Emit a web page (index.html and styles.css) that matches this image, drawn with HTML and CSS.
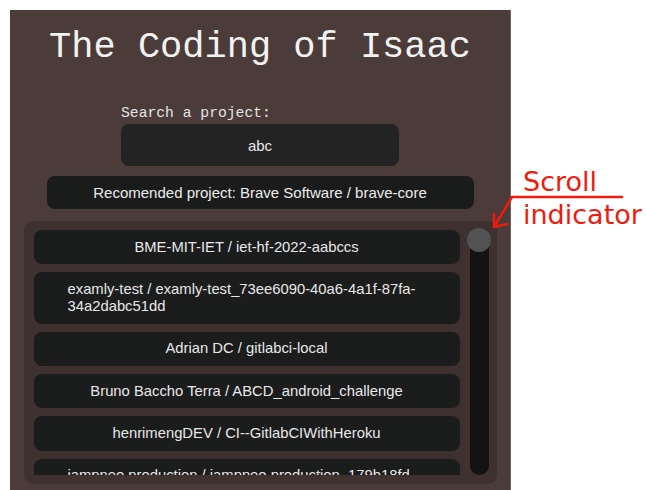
FILE: index.html
```html
<!DOCTYPE html>
<html>
	<head>
		<title>The Coding of Isaac</title>
		<link rel="stylesheet" href="styles.css">
	</head>

	<body>
		<div id="panel">
			<h1>The Coding of Isaac</h1>
			<div id="search">
				<label for="searchInput">Search a project:</label>
				<input id="searchInput" type="text" value="abc">
			</div>
			<div id="recommended">Recomended project: Brave Software / brave-core</div>
			<div id="results">
				<div id="resultList">
					<div class="project"><span>BME-MIT-IET / iet-hf-2022-aabccs</span></div>
					<div class="project"><span>examly-test / examly-test_73ee6090-40a6-4a1f-87fa-34a2dabc51dd</span></div>
					<div class="project"><span>Adrian DC / gitlabci-local</span></div>
					<div class="project"><span>Bruno Baccho Terra / ABCD_android_challenge</span></div>
					<div class="project"><span>henrimengDEV / CI--GitlabCIWithHeroku</span></div>
					<div class="project"><span>iampneo production / iampneo production_179b18fd-509</span></div>
				</div>
				<div id="scrollTrack">
					<div id="scrollThumb"></div>
				</div>
			</div>
		</div>

		<div id="note">
			<svg width="140" height="40" viewBox="0 0 140 40">
				<path d="M20 7 L130 7 M20 7 L2 37 M2 37 L2 24 M2 37 L15 34" stroke="#f21a0c" stroke-width="2.5" fill="none" stroke-linecap="round"/>
			</svg>
			<p>Scroll<br>indicator</p>
		</div>
	</body>
</html>
```

FILE: styles.css
```css
html, body {
	margin: 0px;
	padding: 0px;
	overflow: hidden;
	background: white;
}

body {
	padding: 10px 0px 0px 10px;
	height: 480px;
}

#panel {
	width: 500px;
	height: 480px;
	background: #4b3c3a;
	border-right: 1px solid #6f6361;
	display: flex;
	flex-direction: column;
	align-items: center;
}

h1 {
	font-family: "Liberation Mono", monospace;
	font-weight: normal;
	font-size: 37px;
	color: #f2f2f2;
	margin: 17px 0px 0px 0px;
	line-height: 40px;
}

#search {
	display: flex;
	flex-direction: column;
	margin-top: 39px;
}

#search label {
	font-family: "Liberation Mono", monospace;
	font-size: 14.7px;
	color: #e4e4e4;
	line-height: 14px;
	margin-bottom: 4px;
}

#searchInput {
	width: 278px;
	height: 42px;
	box-sizing: border-box;
	border: none;
	border-radius: 8px;
	background: #222322;
	color: #e8e8e8;
	font-family: "Liberation Sans", Arial, sans-serif;
	font-size: 15px;
	text-align: center;
	outline: none;
}

#recommended {
	width: 427px;
	height: 33px;
	margin-top: 10px;
	border-radius: 8px;
	background: #1a1b1b;
	color: #ececec;
	font-family: "Liberation Sans", Arial, sans-serif;
	font-size: 15px;
	display: flex;
	align-items: center;
	justify-content: center;
}

#results {
	width: 473px;
	height: 263px;
	box-sizing: border-box;
	margin-top: 12px;
	padding: 9px 8px 9px 10px;
	background: #3f3130;
	border-radius: 9px;
	display: flex;
	gap: 10px;
}

#resultList {
	flex: 1;
	overflow: hidden;
	display: flex;
	flex-direction: column;
	gap: 8px;
}

.project {
	flex-shrink: 0;
	display: flex;
	justify-content: center;
	padding: 8.5px 34px;
	border-radius: 8px;
	background: #1b1c1c;
	color: #e8e8e8;
	font-family: "Liberation Sans", Arial, sans-serif;
	font-size: 14.8px;
	line-height: 17.25px;
}

#scrollTrack {
	position: relative;
	width: 19px;
	border-radius: 10px;
	background: #121312;
}

#scrollThumb {
	position: absolute;
	left: -2.5px;
	top: -2px;
	width: 24px;
	height: 24px;
	border-radius: 50%;
	background: #525252;
}

#note {
	position: absolute;
	left: 492px;
	top: 165px;
}

#note svg {
	position: absolute;
	left: 0px;
	top: 25px;
}

#note p {
	margin: 0px 0px 0px 31px;
	font-family: "DejaVu Sans", sans-serif;
	font-size: 27px;
	line-height: 33px;
	color: #f21a0c;
}
```
